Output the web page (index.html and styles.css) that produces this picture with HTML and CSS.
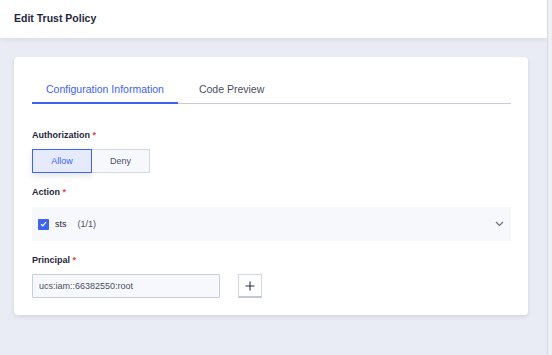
FILE: index.html
```html
<!DOCTYPE html>
<html lang="en">
<head>
    <meta charset="utf-8">
    <title>Edit Trust Policy</title>
    <link rel="stylesheet" href="styles.css">
</head>
<body>
<div class="layout">
    <div class="main">
        <div class="header">Edit Trust Policy</div>
        <div class="card">
            <div class="tabs">
                <span class="tab active">Configuration Information</span>
                <span class="tab">Code Preview</span>
            </div>

            <div class="field first">
                <div class="label">Authorization <i>*</i></div>
                <div class="seg">
                    <span class="seg-btn on">Allow</span>
                    <span class="seg-btn">Deny</span>
                </div>
            </div>

            <div class="field">
                <div class="label action-label">Action <i>*</i></div>
                <div class="action-row">
                    <span class="check">
                        <svg width="7" height="6" viewBox="0 0 7 6"><path d="M1 3.2 L2.8 4.8 L6 1.2" fill="none" stroke="#fff" stroke-width="1.2"/></svg>
                    </span>
                    <span class="svc">sts</span>
                    <span class="count">(1/1)</span>
                    <svg class="arrow" width="9" height="6" viewBox="0 0 9 6"><path d="M1 1 L4.5 4.5 L8 1" fill="none" stroke="#6b7085" stroke-width="1.2"/></svg>
                </div>
            </div>

            <div class="field last">
                <div class="label">Principal <i>*</i></div>
                <div class="principal">
                    <input class="input" type="text" value="ucs:iam::66382550:root">
                    <span class="add">
                        <svg width="10" height="10" viewBox="0 0 10 10"><path d="M5 0.5 V9.5 M0.5 5 H9.5" stroke="#2b3045" stroke-width="1.1"/></svg>
                    </span>
                </div>
            </div>
        </div>
    </div>
    <div class="scroll"></div>
</div>
</body>
</html>
```

FILE: styles.css
```css
* {
    box-sizing: border-box;
}

html, body {
    margin: 0;
    height: 100%;
}

body {
    font-family: "Liberation Sans", Arial, sans-serif;
    color: #1f2540;
    background-color: #e9ecf4;
}

.layout {
    display: flex;
    height: 100%;
}

.main {
    width: 547px;
}

.scroll {
    flex: 1;
    border-left: 1px solid #d6d9e2;
    background-color: #eef0f5;
}

.header {
    height: 38px;
    line-height: 36px;
    padding-left: 14px;
    font-size: 10.5px;
    font-weight: bold;
    background-color: #fff;
    box-shadow: 0 2px 4px rgba(40, 50, 90, 0.08);
}

.card {
    margin: 19px 0 0 14px;
    width: 514px;
    padding: 19px 17px 17px 18px;
    background-color: #fff;
    border-radius: 4px;
    box-shadow: 0 2px 4px rgba(40, 50, 90, 0.12);
}

/*tabs*/
.tabs {
    display: flex;
    height: 28px;
    border-bottom: 1px solid #c8ccd8;
}

.tab {
    padding: 0 14px;
    margin-right: 7px;
    line-height: 26px;
    font-size: 10.5px;
    color: #4a4f63;
}

.tab.active {
    color: #3d63f0;
    border-bottom: 2px solid #3d63f0;
    margin-bottom: -1px;
}

/*form*/
.field {
    margin-top: 13px;
}

.field.first {
    margin-top: 25px;
}

.label {
    font-size: 9px;
    font-weight: bold;
    line-height: 12px;
    margin-bottom: 8px;
}

.label i {
    font-style: normal;
    color: #e54545;
}

.action-label {
    margin-bottom: 9px;
}

.seg {
    display: flex;
}

.seg-btn {
    width: 58px;
    height: 24px;
    line-height: 22px;
    text-align: center;
    font-size: 9px;
    color: #4a4f63;
    background-color: #f7f8fb;
    border: 1px solid #d3d7e5;
    border-left: none;
}

.seg-btn.on {
    width: 60px;
    color: #3d63f0;
    background-color: #e5eafd;
    border: 1px solid #3d63f0;
    box-shadow: 0 3px 6px rgba(40, 50, 90, 0.12);
}

.action-row {
    display: flex;
    align-items: center;
    height: 34px;
    padding: 0 7px 0 6px;
    font-size: 9px;
    background-color: #f7f8fb;
}

.check {
    display: inline-flex;
    align-items: center;
    justify-content: center;
    width: 11px;
    height: 11px;
    border-radius: 1px;
    background-color: #3d63f0;
}

.svc {
    margin-left: 6px;
}

.count {
    margin-left: 11px;
    color: #4a4f63;
}

.arrow {
    margin-left: auto;
}

.principal {
    display: flex;
    align-items: center;
}

.input {
    width: 188px;
    height: 24px;
    padding: 0 6px;
    font-family: inherit;
    font-size: 9px;
    color: #4a4f63;
    background-color: #f7f8fb;
    border: 1px solid #c8cde0;
    border-radius: 1px;
    outline: none;
}

.add {
    display: inline-flex;
    align-items: center;
    justify-content: center;
    width: 24px;
    height: 24px;
    margin-left: 18px;
    background-color: #fff;
    border: 1px solid #d3d7e5;
    border-bottom: 2px solid #c3c8d8;
    border-radius: 1px;
}
```
